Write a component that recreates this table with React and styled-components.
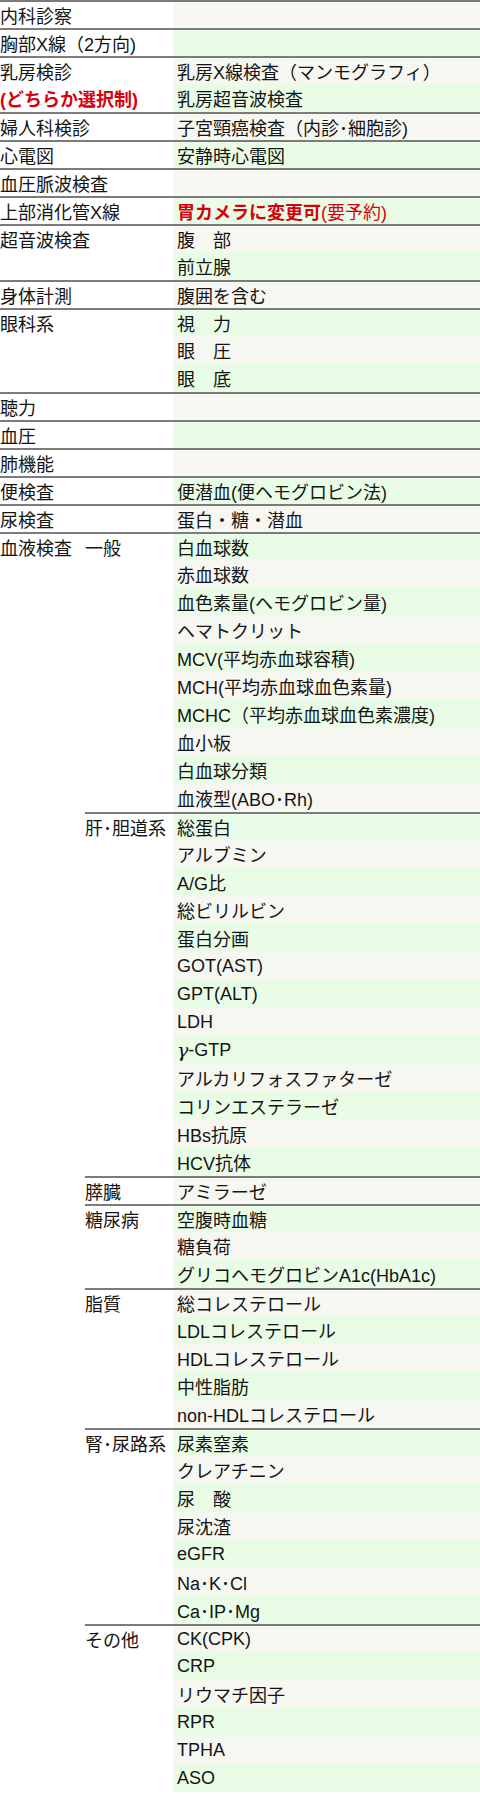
import React from 'react';
import styled, { createGlobalStyle } from 'styled-components';

const GlobalStyle = createGlobalStyle`
  html, body { margin: 0; padding: 0; background: #fff; }
  body {
    font-family: "Liberation Sans", "Noto Sans CJK JP", sans-serif;
    color: #141414;
  }
`;

const BORDER = '#7b7b7b';

const Table = styled.div`
  width: 480px;
  display: flex;
  flex-direction: column;
  font-size: 18px;
  padding-bottom: 2px;
`;

const Section = styled.section`
  display: grid;
  grid-template-columns: ${(p) => (p.$nested ? '85px 1fr' : '173px 1fr')};
  border-top: 2px solid ${BORDER};
`;

const SubGroups = styled.div`
  display: flex;
  flex-direction: column;
`;

const SubGroup = styled.div`
  display: grid;
  grid-template-columns: 88px 1fr;
  border-top: ${(p) => (p.$divided ? `2px solid ${BORDER}` : 'none')};
`;

const LabelCol = styled.div`
  display: flex;
  flex-direction: column;
  background: #fff;
`;

const Line = styled.div`
  height: ${(p) => (p.$first ? 26 : 28)}px;
  display: flex;
  align-items: center;
  white-space: nowrap;
`;

const Items = styled.div`
  display: flex;
  flex-direction: column;
`;

const Item = styled.div`
  height: ${(p) => (p.$first ? 26 : 28)}px;
  padding-left: 4px;
  display: flex;
  align-items: center;
  white-space: nowrap;
  background: ${(p) => (p.$alt ? '#e9fde6' : '#f7f7f2')};
`;

const Red = styled.span`
  color: #d8000c;
  font-weight: ${(p) => (p.$bold ? 700 : 400)};
`;

const Gamma = styled.span`
  font-family: "DejaVu Serif", serif;
  font-style: italic;
  font-size: 19px;
`;

const sections = [
  { label: ['内科診察'], items: [''] },
  { label: ['胸部X線（2方向)'], items: [''] },
  {
    label: ['乳房検診', <Red $bold key="r">(どちらか選択制)</Red>],
    items: ['乳房X線検査（マンモグラフィ）', '乳房超音波検査'],
  },
  { label: ['婦人科検診'], items: ['子宮頸癌検査（内診･細胞診)'] },
  { label: ['心電図'], items: ['安静時心電図'] },
  { label: ['血圧脈波検査'], items: [''] },
  {
    label: ['上部消化管X線'],
    items: [
      <>
        <Red $bold>胃カメラに変更可</Red>
        <Red>(要予約)</Red>
      </>,
    ],
  },
  { label: ['超音波検査'], items: ['腹　部', '前立腺'] },
  { label: ['身体計測'], items: ['腹囲を含む'] },
  { label: ['眼科系'], items: ['視　力', '眼　圧', '眼　底'] },
  { label: ['聴力'], items: [''] },
  { label: ['血圧'], items: [''] },
  { label: ['肺機能'], items: [''] },
  { label: ['便検査'], items: ['便潜血(便ヘモグロビン法)'] },
  { label: ['尿検査'], items: ['蛋白・糖・潜血'] },
  {
    label: ['血液検査'],
    groups: [
      {
        label: '一般',
        items: [
          '白血球数',
          '赤血球数',
          '血色素量(ヘモグロビン量)',
          'ヘマトクリット',
          'MCV(平均赤血球容積)',
          'MCH(平均赤血球血色素量)',
          'MCHC（平均赤血球血色素濃度)',
          '血小板',
          '白血球分類',
          '血液型(ABO･Rh)',
        ],
      },
      {
        label: '肝･胆道系',
        items: [
          '総蛋白',
          'アルブミン',
          'A/G比',
          '総ビリルビン',
          '蛋白分画',
          'GOT(AST)',
          'GPT(ALT)',
          'LDH',
          <>
            <Gamma>γ</Gamma>-GTP
          </>,
          'アルカリフォスファターゼ',
          'コリンエステラーゼ',
          'HBs抗原',
          'HCV抗体',
        ],
      },
      { label: '膵臓', items: ['アミラーゼ'] },
      { label: '糖尿病', items: ['空腹時血糖', '糖負荷', 'グリコヘモグロビンA1c(HbA1c)'] },
      {
        label: '脂質',
        items: ['総コレステロール', 'LDLコレステロール', 'HDLコレステロール', '中性脂肪', 'non-HDLコレステロール'],
      },
      {
        label: '腎･尿路系',
        items: ['尿素窒素', 'クレアチニン', '尿　酸', '尿沈渣', 'eGFR', 'Na･K･Cl', 'Ca･IP･Mg'],
      },
      { label: 'その他', items: ['CK(CPK)', 'CRP', 'リウマチ因子', 'RPR', 'TPHA', 'ASO'] },
    ],
  },
];

function ItemList({ items, start }) {
  return (
    <Items>
      {items.map((it, i) => (
        <Item key={i} $first={i === 0} $alt={(start + i) % 2 === 1}>
          {it}
        </Item>
      ))}
    </Items>
  );
}

function Labels({ lines }) {
  return (
    <LabelCol>
      {lines.map((l, i) => (
        <Line key={i} $first={i === 0}>
          {l}
        </Line>
      ))}
    </LabelCol>
  );
}

export default function App() {
  let row = 0;
  return (
    <>
      <GlobalStyle />
      <Table>
        {sections.map((s, si) => {
          if (s.groups) {
            return (
              <Section key={si} $nested>
                <Labels lines={s.label} />
                <SubGroups>
                  {s.groups.map((g, gi) => {
                    const start = row;
                    row += g.items.length;
                    return (
                      <SubGroup key={gi} $divided={gi > 0}>
                        <Labels lines={[g.label]} />
                        <ItemList items={g.items} start={start} />
                      </SubGroup>
                    );
                  })}
                </SubGroups>
              </Section>
            );
          }
          const start = row;
          row += s.items.length;
          return (
            <Section key={si}>
              <Labels lines={s.label} />
              <ItemList items={s.items} start={start} />
            </Section>
          );
        })}
      </Table>
    </>
  );
}
